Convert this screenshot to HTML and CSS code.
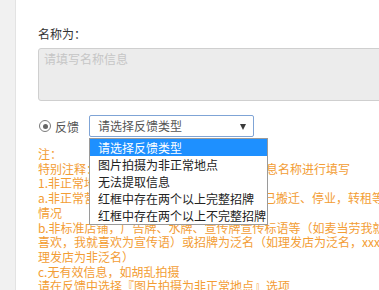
FILE: index.html
```html
<!DOCTYPE html>
<html lang="zh-CN">
<head>
  <meta charset="UTF-8">
  <title>名称信息反馈</title>
  <link rel="stylesheet" href="styles.css">
</head>
<body>
  <div class="side"></div>
  <div class="main">
    <div class="label">名称为：</div>
    <div class="textarea">请填写名称信息</div>

    <div class="feedback">
      <span class="radio"></span>
      <span class="radio-text">反馈</span>
      <div class="select">
        <span>请选择反馈类型</span>
        <i class="arrow"></i>
        <ul class="options">
          <li class="active">请选择反馈类型</li>
          <li>图片拍摄为非正常地点</li>
          <li>无法提取信息</li>
          <li>红框中存在两个以上完整招牌</li>
          <li>红框中存在两个以上不完整招牌</li>
        </ul>
      </div>
    </div>

    <div class="notes">
      注：<br>
      特别注释：请根据图片中红框内店铺招牌信息名称进行填写<br>
      1.非正常地点，以下情况均视为非正常地点:<br>
      a.非正常营业店铺，如店铺已倒闭、装修或已搬迁、停业，转租等<br>
      情况<br>
      b.非标准店铺，广告牌、水牌、宣传牌宣传标语等（如麦当劳我就<br>
      喜欢，我就喜欢为宣传语）或招牌为泛名（如理发店为泛名，xxx<br>
      理发店为非泛名）<br>
      c.无有效信息，如胡乱拍摄<br>
      请在反馈中选择『图片拍摄为非正常地点』选项
    </div>
  </div>
</body>
</html>
```

FILE: styles.css
```css
body {
  margin: 0;
  height: 290px;
  overflow: hidden;
  display: flex;
  background: #fff;
  font-family: "Noto Sans CJK SC", "Noto Sans", sans-serif;
  font-size: 12px;
}

.side {
  flex: none;
  width: 15px;
  background: #f1f1f1;
  border-right: 1px solid #e3e3e3;
}

.main {
  flex: 1;
  min-width: 0;
  padding: 26px 0 0 22px;
}

.label {
  line-height: 15px;
  color: #333;
  margin-bottom: 7px;
}

.textarea {
  box-sizing: border-box;
  width: 420px;
  height: 53px;
  padding: 2px 5px;
  line-height: 15px;
  background: #ececec;
  border: 1px solid #cfcfcf;
  border-radius: 3px;
  color: #c6c6c6;
}

.feedback {
  display: flex;
  align-items: center;
  height: 22px;
  margin-top: 14px;
}

.radio {
  box-sizing: border-box;
  width: 12px;
  height: 12px;
  margin-left: 1px;
  border: 1.5px solid #7a7a7a;
  border-radius: 50%;
  display: flex;
  align-items: center;
  justify-content: center;
}

.radio::after {
  content: "";
  width: 5px;
  height: 5px;
  border-radius: 50%;
  background: #666;
}

.radio-text {
  margin-left: 4px;
  color: #555;
}

.select {
  position: relative;
  box-sizing: border-box;
  width: 165px;
  height: 22px;
  margin-left: 10px;
  padding-left: 8px;
  line-height: 20px;
  border: 1px solid #7fa4d6;
  border-radius: 2px;
  color: #555;
}

.arrow {
  position: absolute;
  right: 7px;
  top: 8px;
  width: 0;
  height: 0;
  border-left: 3.5px solid transparent;
  border-right: 3.5px solid transparent;
  border-top: 6px solid #3a3a3a;
}

.options {
  position: absolute;
  top: 22px;
  left: -1px;
  width: 179px;
  box-sizing: border-box;
  margin: 0;
  padding: 0;
  list-style: none;
  background: #fff;
  border: 1px solid #9a9a9a;
  color: #222;
}

.options li {
  height: 17px;
  line-height: 17px;
  padding-left: 8px;
  white-space: nowrap;
}

.options li.active {
  background: #1e90ff;
  color: #fff;
}

.notes {
  margin-top: 10px;
  line-height: 14.7px;
  color: #f39d34;
  white-space: nowrap;
}
```
